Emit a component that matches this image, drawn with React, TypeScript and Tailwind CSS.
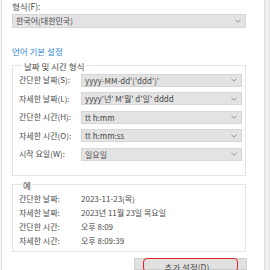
import React from "react";

const font = { fontFamily: '"Noto Sans CJK KR", "Noto Sans", sans-serif' };

function Chevron() {
  return (
    <svg width="6" height="4" viewBox="0 0 6 4" className="shrink-0">
      <path d="M0.5 0.8 L3 3.2 L5.5 0.8" fill="none" stroke="#8a8a8a" strokeWidth="0.9" />
    </svg>
  );
}

function Combo({ value, className = "" }: { value: string; className?: string }) {
  return (
    <div
      className={`h-[13px] flex items-center justify-between bg-[#e3e3e3] border border-[#d6d6d6] pl-[3px] pr-[4px] text-[8px] text-[#4a4a4a] ${className}`}
    >
      <span className="whitespace-nowrap leading-[11px]">{value}</span>
      <Chevron />
    </div>
  );
}

const formats = [
  ["간단한 날짜(S):", "yyyy-MM-dd'('ddd')'"],
  ["자세한 날짜(L):", "yyyy'년' M'월' d'일' dddd"],
  ["간단한 시간(H):", "tt h:mm"],
  ["자세한 시간(O):", "tt h:mm:ss"],
  ["시작 요일(W):", "일요일"],
];

const examples = [
  ["간단한 날짜:", "2023-11-23(목)"],
  ["자세한 날짜:", "2023년 11월 23일 목요일"],
  ["간단한 시간:", "오후 8:09"],
  ["자세한 시간:", "오후 8:09:39"],
];

export default function App() {
  return (
    <div className="w-[270px] h-[270px] overflow-hidden bg-white flex text-[#4a4a4a]" style={font}>
      {/* left window edge */}
      <div className="w-[2px] border-r border-[#e2e2e2] bg-[#f7f7f7]" />

      {/* main panel */}
      <div className="w-[262px] pl-[10px] pr-[18px] flex flex-col">
        <div className="text-[8.5px] leading-[10px] pt-[1px]">형식(F):</div>
        <Combo value="한국어(대한민국)" className="mt-[3px] h-[14px] text-[8.5px]" />

        <div className="mt-[18px] text-[8.5px] leading-[10px] text-[#2f86d4]">언어 기본 설정</div>

        {/* date & time formats */}
        <fieldset className="mt-[5px] border border-[#e4e4e4] h-[116px] pl-[6px] pr-[3px]">
          <legend className="ml-[3px] px-[2px] text-[8.5px] leading-[10px]">날짜 및 시간 형식</legend>
          <div className="flex flex-col gap-[5.5px] mt-[3px]">
            {formats.map(([label, value]) => (
              <div key={label} className="flex items-center">
                <span className="w-[62px] text-[8px] leading-[10px] whitespace-nowrap">{label}</span>
                <Combo value={value} className="flex-1" />
              </div>
            ))}
          </div>
        </fieldset>

        {/* examples */}
        <fieldset className="mt-[4px] border border-[#e4e4e4] h-[73px] pl-[6px]">
          <legend className="ml-[3px] px-[1px] text-[8.5px] leading-[10px]">예</legend>
          <div className="flex flex-col gap-[4px] mt-[4px]">
            {examples.map(([label, value]) => (
              <div key={label} className="flex items-center text-[8px] leading-[10px]">
                <span className="w-[62px] whitespace-nowrap">{label}</span>
                <span className="whitespace-nowrap">{value}</span>
              </div>
            ))}
          </div>
        </fieldset>

        {/* more settings button */}
        <div className="mt-[6px] ml-[122px] w-[113px] h-[12px] bg-[#e1e1e1] border border-[#d0d0d0] flex justify-center relative">
          <div className="absolute left-[8px] right-[8px] top-[-1px] h-[14px] rounded-[4px] border-[1.5px] border-[#e8202a]" />
          <span className="text-[8.5px] leading-[10px] mt-[3px] whitespace-nowrap">추가 설정(D)...</span>
        </div>
      </div>

      {/* right window edge */}
      <div className="w-[6px] border-l border-[#dcdcdc] bg-[#f0f0f0] border-r border-r-[#e6e6e6]" />
    </div>
  );
}
